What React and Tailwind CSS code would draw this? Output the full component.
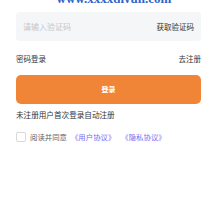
export default function App() {
  return (
    <div className="w-[217px] h-[217px] bg-white overflow-hidden px-4 font-['Noto_Sans_CJK_SC',sans-serif]">
      {/* cut-off site url above */}
      <div className="h-[3px] overflow-hidden flex items-end justify-center pl-[11px]">
        <span className="mb-[-2px] text-[13px] leading-none font-bold text-[#2f63c9] font-['Liberation_Serif',serif] whitespace-nowrap">
          www.xxxxqiyun.com
        </span>
      </div>

      <div className="mt-[9px] h-[29px] rounded-[4px] bg-[#f5f6f8] flex items-center justify-between pl-[7px] pr-[7px]">
        <span className="text-[8px] text-[#c4c7cc]">请输入验证码</span>
        <span className="text-[7.5px] text-[#333]">获取验证码</span>
      </div>

      <div className="mt-[13px] flex items-center justify-between text-[7.5px] text-[#333] leading-[10px]">
        <span>密码登录</span>
        <span>去注册</span>
      </div>

      <button className="mt-[11px] w-full h-[29px] rounded-[5px] bg-[#f08437] text-white text-[7px] font-bold flex items-center justify-center">
        登录
      </button>

      <div className="mt-[6px] text-[7.6px] text-[#333] leading-[10px]">未注册用户首次登录自动注册</div>

      <div className="mt-[12px] flex items-center text-[7.4px] leading-[10px]">
        <span className="w-[10px] h-[10px] rounded-[2px] border border-[#d9d9d9] bg-white" />
        <span className="ml-[4px] text-[#666]">阅读并同意</span>
        <span className="ml-[4px] text-[#7a6cf2]">《用户协议》</span>
        <span className="ml-[6px] text-[#7a6cf2]">《隐私协议》</span>
      </div>
    </div>
  )
}
